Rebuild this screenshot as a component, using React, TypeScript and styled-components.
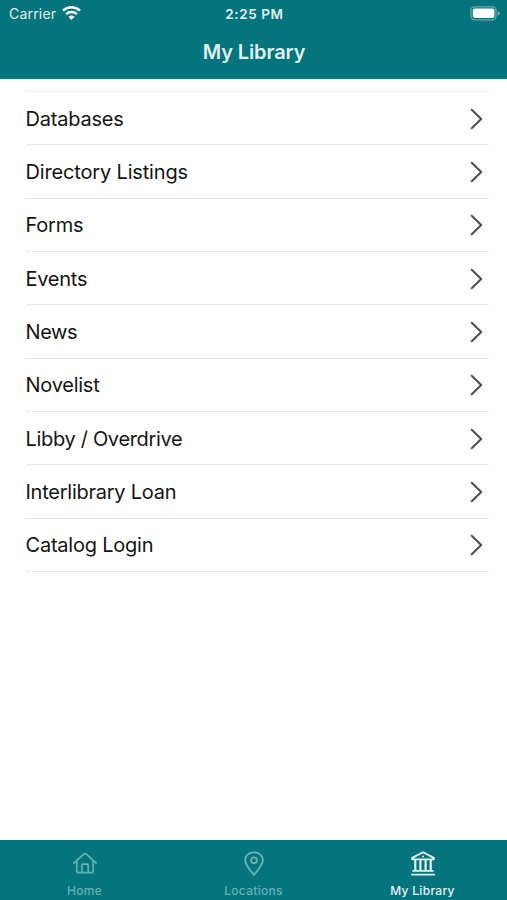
import React from "react";
import styled, { createGlobalStyle } from "styled-components";

const GlobalStyle = createGlobalStyle`
  * { box-sizing: border-box; }
  body { margin: 0; background: #fff; }
  svg { display: block; flex: none; }
`;

const Screen = styled.div`
  width: 507px;
  height: 900px;
  display: flex;
  flex-direction: column;
  overflow: hidden;
  background: #fff;
  font-family: Inter, "Liberation Sans", sans-serif;
`;

const Header = styled.header`
  height: 79px;
  flex: none;
  background: #05757d;
  color: #e2f0f1;
`;

const StatusBar = styled.div`
  height: 27px;
  display: grid;
  grid-template-columns: 1fr auto 1fr;
  align-items: center;
  padding: 0 7px 0 9px;
`;

const Carrier = styled.div`
  display: flex;
  align-items: center;
  gap: 6px;
  font-size: 14px;
  letter-spacing: 0.2px;
`;

const Clock = styled.div`
  font-size: 13.5px;
  font-weight: 600;
  letter-spacing: 0.6px;
`;

const Battery = styled.div`
  justify-self: end;
`;

const Title = styled.h1`
  margin: 0;
  height: 51px;
  line-height: 51px;
  padding-left: 1px;
  text-align: center;
  font-size: 20px;
  font-weight: 600;
  letter-spacing: -0.1px;
`;

const List = styled.ul`
  list-style: none;
  margin: 12px 18px 0 26px;
  padding: 0;
  flex: 1;
  border-top: 1px solid #ebebeb;
`;

const Row = styled.li`
  height: 53.33px;
  display: flex;
  align-items: center;
  justify-content: space-between;
  border-bottom: 1px solid #e8e8e8;
  padding: 1px 6px 0 0;
`;

const Label = styled.span<{ $spacing: number }>`
  font-size: 20px;
  margin-left: -0.5px;
  color: #141414;
  letter-spacing: ${(p) => p.$spacing}px;
  white-space: nowrap;
`;

const TabBar = styled.nav`
  height: 60px;
  flex: none;
  display: grid;
  grid-template-columns: repeat(3, 1fr);
  background: #05757d;
`;

const Tab = styled.div<{ $active?: boolean }>`
  display: flex;
  flex-direction: column;
  align-items: center;
  padding-top: 10px;
  color: ${(p) => (p.$active ? "#e6f3f4" : "#69b0b6")};
`;

const TabLabel = styled.span`
  margin-top: 7px;
  font-size: 12px;
  line-height: 16px;
  font-weight: 500;
  letter-spacing: 0.3px;
`;

const rows: [string, number][] = [
  ["Databases", -0.22],
  ["Directory Listings", -0.16],
  ["Forms", -0.2],
  ["Events", -0.25],
  ["News", -0.4],
  ["Novelist", -0.25],
  ["Libby / Overdrive", -0.32],
  ["Interlibrary Loan", -0.25],
  ["Catalog Login", -0.22],
];

const Wifi = () => (
  <svg width="19" height="15" viewBox="0 0 19 15" fill="none" stroke="#fff" strokeWidth="2.4">
    <path d="M1 4.7C6 0.1 13 0.1 18 4.7" />
    <path d="M4.1 8.1C7.2 5.3 11.8 5.3 14.9 8.1" />
    <path d="M6.4 10.7Q9.5 8.2 12.6 10.7L9.5 13.9Z" fill="#fff" stroke="none" />
  </svg>
);

const BatteryIcon = () => (
  <svg width="30" height="15" viewBox="0 0 30 15">
    <rect x="1" y="0.8" width="25" height="13" rx="3.5" fill="none" stroke="#64aab0" strokeWidth="1.3" />
    <rect x="2.8" y="2.6" width="21.6" height="9.4" rx="2" fill="#fff" />
    <path d="M27.5 5Q30 5.8 30 7.3T27.5 9.6Z" fill="#64aab0" />
  </svg>
);

const Chevron = () => (
  <svg width="13" height="22" viewBox="0 0 13 22" fill="none" stroke="#4c4c4c" strokeWidth="2" strokeLinecap="round" strokeLinejoin="round">
    <path d="M1.7 1.7L11.2 11L1.7 20.3" />
  </svg>
);

const HomeIcon = () => (
  <svg width="26" height="26" viewBox="0 0 26 26" fill="none" stroke="currentColor" strokeWidth="1.7" strokeLinecap="round" strokeLinejoin="round">
    <path d="M1.9 13L11.8 4.1Q13 3.1 14.2 4.1L24.1 13" />
    <path d="M4.8 10.5V20.9Q4.8 22.6 6.5 22.6H19.5Q21.2 22.6 21.2 20.9V10.5" />
    <path d="M9.8 22.3V15.2Q9.8 14.2 10.8 14.2H15.2Q16.2 14.2 16.2 15.2V22.3" />
  </svg>
);

const PinIcon = () => (
  <svg width="26" height="26" viewBox="0 0 26 26" fill="none" stroke="currentColor" strokeWidth="1.9" strokeLinejoin="round">
    <path d="M13 24.9C9.8 21 4.2 14.8 4.2 10.2C4.2 5.6 8.2 2.2 13 2.2C17.8 2.2 21.8 5.6 21.8 10.2C21.8 14.8 16.2 21 13 24.9Z" />
    <circle cx="13" cy="10.3" r="2.9" />
  </svg>
);

const LibraryIcon = () => (
  <svg width="26" height="26" viewBox="0 0 26 26" fill="none" stroke="currentColor" strokeWidth="1.8" strokeLinecap="round" strokeLinejoin="round">
    <path d="M2.2 7.9L13 2.3L23.8 7.9V9.3H2.2Z" />
    <path d="M5.3 10.8V19.9M10.4 10.8V19.9M15.6 10.8V19.9M20.7 10.8V19.9" strokeWidth="2.2" />
    <path d="M3.1 20.9H22.9M1.8 24.6H24.2" />
    <circle cx="13" cy="6.6" r="1" fill="currentColor" stroke="none" />
  </svg>
);

export default function App() {
  return (
    <>
      <GlobalStyle />
      <Screen>
        <Header>
          <StatusBar>
            <Carrier>Carrier <Wifi /></Carrier>
            <Clock>2:25 PM</Clock>
            <Battery><BatteryIcon /></Battery>
          </StatusBar>
          <Title>My Library</Title>
        </Header>
        <List>
          {rows.map(([name, spacing]) => (
            <Row key={name}>
              <Label $spacing={spacing}>{name}</Label>
              <Chevron />
            </Row>
          ))}
        </List>
        <TabBar>
          <Tab><HomeIcon /><TabLabel>Home</TabLabel></Tab>
          <Tab><PinIcon /><TabLabel>Locations</TabLabel></Tab>
          <Tab $active><LibraryIcon /><TabLabel>My Library</TabLabel></Tab>
        </TabBar>
      </Screen>
    </>
  );
}
